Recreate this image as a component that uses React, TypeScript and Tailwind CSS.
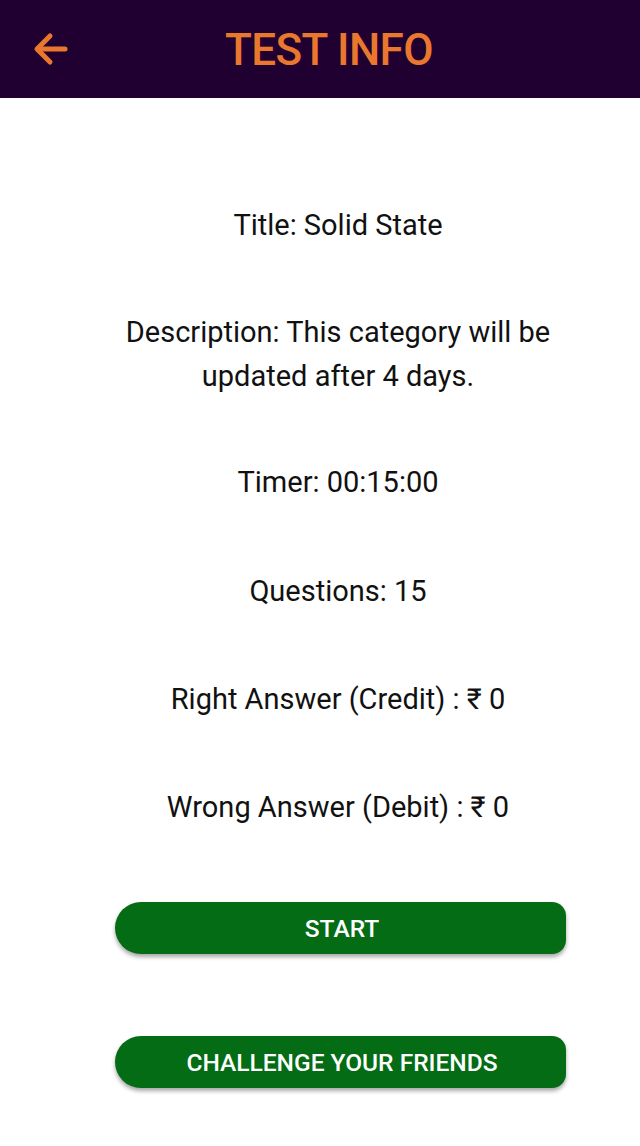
import React from "react";

export default function App() {
  const items: [string, string][] = [
    ["Timer: 00:15:00", "mt-[62px]"],
    ["Questions: 15", "mt-[65px]"],
    ["Right Answer (Credit) : ₹ 0", "mt-[64px]"],
    ["Wrong Answer (Debit) : ₹ 0", "mt-[64px]"],
  ];
  return (
    <div className="w-[640px] h-[1146px] bg-white overflow-hidden" style={{ fontFamily: "Roboto, 'Noto Sans', sans-serif" }}>
      <div className="h-[98px] bg-[#200031] flex items-center relative">
        <div className="absolute left-[33px] top-[31px]">
          <svg width="36" height="36" viewBox="0 0 36 36" fill="none" stroke="#ea772e" strokeWidth="5" strokeLinecap="round" strokeLinejoin="round">
            <path d="M32 18H5" />
            <path d="M17 5L4 18L17 31" />
          </svg>
        </div>
        <div className="w-full pl-[18px] text-center text-[44px] font-medium tracking-[-0.6px] text-[#ea772e] leading-none mt-[1px]">TEST INFO</div>
      </div>
      <div className="flex flex-col items-center pl-[36px] text-[29px] text-[#111] leading-[44px] text-center">
        <div className="mt-[105px]">Title: Solid State</div>
        <div className="mt-[63px] w-[450px]">Description: This category will be updated after 4 days.</div>
        {items.map(([t, m]) => (
          <div key={t} className={m}>{t}</div>
        ))}
      </div>
      <div className="flex flex-col pl-[115px] mt-[73px] gap-[82px]">
        <button className="w-[451px] h-[52px] pl-[3px] pt-[3px] bg-[#036c14] text-white text-[24.5px] font-medium rounded-l-[26px] rounded-r-[14px] shadow-[0_3px_4px_rgba(0,0,0,0.35)]">START</button>
        <button className="w-[451px] h-[52px] pl-[3px] pt-[3px] bg-[#036c14] text-white text-[24.5px] font-medium rounded-l-[26px] rounded-r-[14px] shadow-[0_3px_4px_rgba(0,0,0,0.35)]">CHALLENGE YOUR FRIENDS</button>
      </div>
    </div>
  );
}
